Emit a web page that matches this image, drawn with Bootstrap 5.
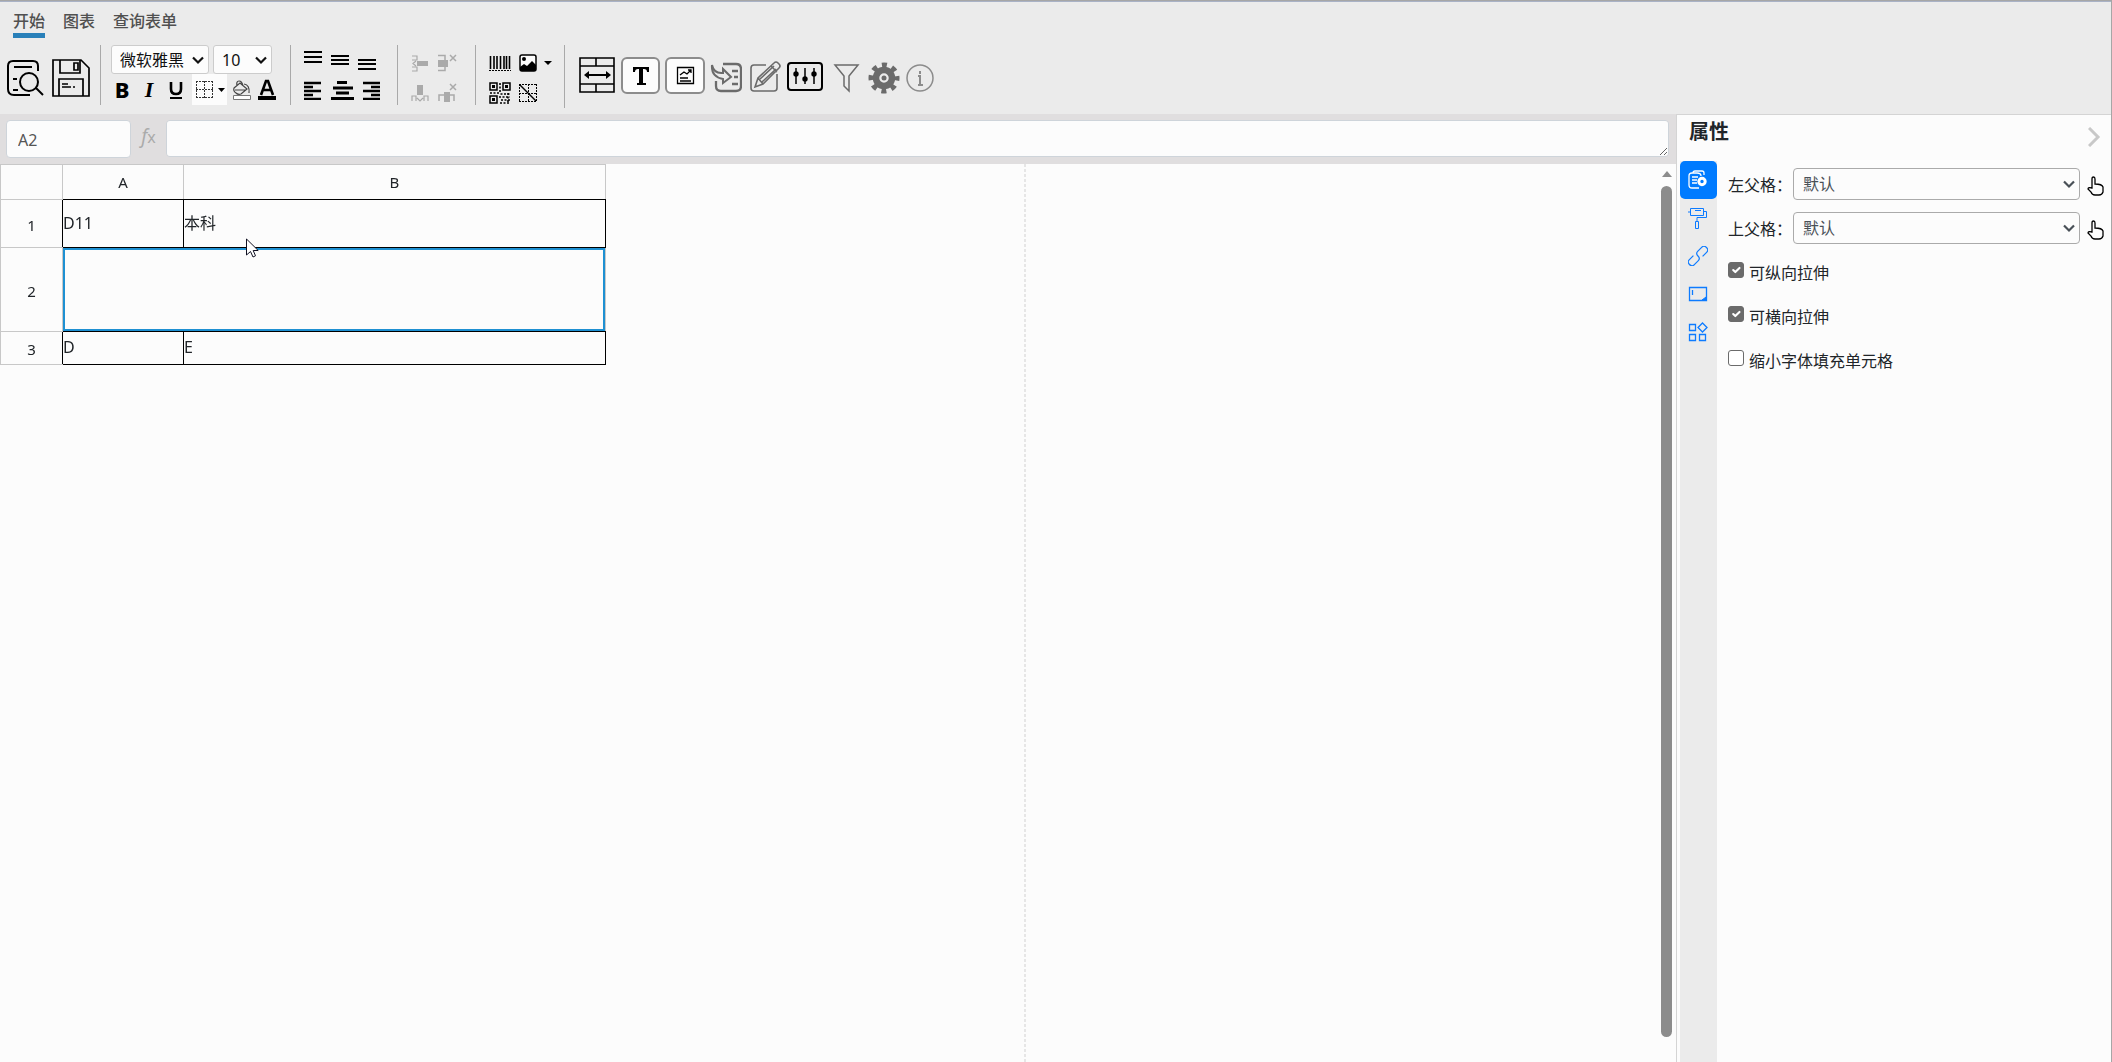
<!DOCTYPE html>
<html lang="zh-CN">
<head>
<meta charset="utf-8">
<meta name="viewport" content="width=device-width, initial-scale=1">
<title>报表设计器</title>
<link href="https://cdn.jsdelivr.net/npm/bootstrap@5.3.0/dist/css/bootstrap.min.css" rel="stylesheet">
<style>
  body { font-family: "Noto Sans", "Noto Sans CJK SC", sans-serif; font-size: 16px; line-height: 24px; color: #212529; background: #fcfcfc; }
  .designer { min-height: 100vh; border-top: 1px solid #a6a6a6; border-right: 1px solid #a6a6a6; }
  svg { display: block; fill: none; stroke: #000; stroke-width: 2; }
  .tool { padding: 0; border: 0; background: transparent; display: flex; align-items: center; justify-content: center; color: #000; }

  /* ribbon */
  .ribbon { background: #ebebeb; border-top: 1px solid #a9b2c6; height: 113px; }
  .ribbon-tabs { padding: 7px 0 0 13px; gap: 18px; height: 43px; }
  .ribbon-tabs a { color: #505050; text-decoration: none; height: 29px; font-weight: 500; line-height: 24px; border-bottom: 5px solid transparent; }
  .ribbon-tabs a.active { border-color: #2980b9; }
  .vline { width: 1px; height: 60px; background: #a9a9a9; }
  .vline.tall { height: 63px; margin-left: 2px; }
  .big-icons { padding: 14px 10px 0 6px; gap: 8px; }
  .font-group { padding: 0 13px 0 10px; }
  .font-group select { height: 29px; padding: 0 24px 0 8px; font-size: 16px; line-height: 24px; color: #111; border: 1px solid #ccc; border-radius: 3px; background-color: #fcfcfc; }
  .form-select { background-image: url("data:image/svg+xml,%3Csvg xmlns='http://www.w3.org/2000/svg' viewBox='0 0 12 12'%3E%3Cpath fill='none' stroke='%23111' stroke-width='2.2' d='M1 3.5l5 5 5-5'/%3E%3C/svg%3E"); background-size: 12px 12px; background-position: right 4px center; }
  .font-family { width: 98px; }
  .font-size { width: 59px; }
  .font-row { height: 31px; gap: 5px; }
  .font-row .tool { width: 22px; height: 31px; font-size: 22px; line-height: 31px; }
  .font-row .tool.narrow { width: 20px; }
  .font-row .tool.wide { width: 35px; background: #fcfcfc; }
  .bold-mark { font-weight: 800; }
  .italic-mark { font-family: "Liberation Serif", serif; font-style: italic; font-weight: 700; }
  .icon-group { padding: 0 10px; }
  .icon-group.low { padding-top: 3px; }
  .icon-group .tool { width: 24px; height: 30px; }
  .pitch { gap: 3px; }
  .pitch-wide { gap: 5px; }
  .off svg { stroke: #aaa; }
  .wide-icons { padding: 12px 0 0 14px; gap: 5px; }
  .wide-icons .gray { stroke: #6b6b6b; }

  /* formula bar */
  .formula { background: #e0dedf; height: 50px; padding: 6px 7px 6px 6px; }
  .formula .form-control { border: 1px solid #ced4da; border-radius: 4px; background: #fcfcfc; color: #555; font-size: 16px; }
  .formula .cell-name { width: 125px; height: 38px; padding: 2px 11px 0; }
  .formula textarea { height: 37px; min-height: 37px; }
  .fx { width: 35px; color: #aaa; font-size: 19px; font-style: italic; line-height: 32px; text-align: center; }
  .fx sub { font-size: 16px; font-style: normal; bottom: 0; }

  /* sheet */
  .page-area { width: 1024px; }
  .page-edge { width: 2px; background: repeating-linear-gradient(#e6e6e6 0 3px, transparent 3px 5px); }
  .sheet { border-collapse: collapse; table-layout: fixed; width: 606px; }
  .sheet th { border: 1px solid #c8c8c8; font-weight: 400; font-size: 15px; text-align: center; padding: 2px 0 0; }
  .sheet .r-head th { padding: 0; }
  .sheet .r-head th + th { border-bottom-color: #000; }
  .sheet .r-one th, .sheet .r-three th { border-right-color: #000; }
  .sheet td { border: 1px solid #000; padding: 0 0 2px; line-height: 24px; vertical-align: middle; }
  .sheet td.picked { border-left-color: #c8c8c8; border-right-color: #c8c8c8; box-shadow: inset 0 0 0 2px #1e90d2; }
  .r-head { height: 35px; } .r-one { height: 48px; } .r-two { height: 84px; } .r-three { height: 33px; }
  .c-index { width: 62px; } .c-a { width: 121px; }
  .pointer { position: absolute; left: 245px; top: 74px; }
  .scroller { width: 11px; margin: 7px 4px 25px 0; gap: 9px; }
  .scroller-arrow { border: 5px solid transparent; border-top: 0; border-bottom: 6px solid #8c8c8c; }
  .scroller-thumb { background: #8c8c8c; border-radius: 6px; width: 11px; }

  /* property panel */
  .panel { width: 435px; border-left: 1px solid #d4d4d4; border-top: 1px solid #d4d4d4; }
  .panel-head { height: 46px; padding: 0 9px 0 12px; }
  .panel-head h2 { font-size: 20px; line-height: 34px; font-weight: 700; margin: 0; }
  .panel-tabs { width: 37px; margin-left: 3px; background: #ebebeb; }
  .panel-tabs .tool { width: 37px; height: 38px; padding-right: 2px; border-radius: 5px; }
  .panel-tabs svg { stroke: #0d7bff; stroke-width: 1; }
  .panel-tabs .active { background: #007bff; }
  .panel-tabs .active svg { stroke: #fff; }
  .fields { padding: 7px 6px 0 11px; gap: 12px; }
  .field { height: 32px; }
  .field label { width: 65px; padding-top: 1px; white-space: nowrap; }
  .field .form-select { height: 32px; padding: 0 24px 0 9px; line-height: 24px; color: #495057; border: 1px solid #aaa; border-radius: 4px; background-color: #fcfcfc; background-image: url("data:image/svg+xml,%3Csvg xmlns='http://www.w3.org/2000/svg' viewBox='0 0 12 12'%3E%3Cpath fill='none' stroke='%23495057' stroke-width='2.2' d='M1 3.5l5 5 5-5'/%3E%3C/svg%3E"); }
  .field .tool { margin-left: 7px; padding-top: 3px; }
  .tick { height: 32px; gap: 5px; }
  .tick .form-check-input { width: 16px; height: 16px; margin: 0 0 4px; border: 1px solid #6b6b6b; border-radius: 3px; }
  .tick .form-check-input:checked { background-color: #6b6b6b; }
  .tick label { padding-top: 1px; }
</style>
</head>
<body>
<div class="designer d-flex flex-column">
  <header class="ribbon">
    <nav class="ribbon-tabs d-flex">
      <a href="#" class="active">开始</a><a href="#">图表</a><a href="#">查询表单</a>
    </nav>
    <div class="d-flex align-items-start">
      <div class="big-icons d-flex">
        <button class="tool" aria-label="预览"><svg width="38" height="38" viewBox="0 0 38 38"><path d="M32 12V7q0-5-5-5H7Q2 2 2 7v23q0 6 6 6h16M8 8h18M7 20h4M7 31h5"/><circle cx="23" cy="23" r="9"/><path d="M30 29l7 7"/></svg></button>
        <button class="tool" aria-label="保存"><svg width="38" height="38" viewBox="0 0 38 38"><path d="M1 1h28l8 8v28H1zM8 1v13h20V1M22 4h4v7h-4zM7 37V20h24v17M10 25h6M10 28h9M21 28h2" stroke-width="1.700"/></svg></button>
      </div>
      <div class="vline"></div>
      <div class="font-group">
        <div class="d-flex gap-1">
          <select class="form-select font-family" aria-label="字体"><option>微软雅黑</option></select>
          <select class="form-select font-size" aria-label="字号"><option>10</option></select>
        </div>
        <div class="font-row d-flex">
          <button class="tool bold-mark">B</button>
          <button class="tool italic-mark">I</button>
          <button class="tool" aria-label="下划线"><svg width="16" height="20" viewBox="0 0 16 20"><path d="M3 2v7q0 5 5 5t5-5V2" stroke-width="2.6"/><path d="M2 18h12"/></svg></button>
          <button class="tool wide" aria-label="边框"><svg width="30" height="20" viewBox="0 0 30 20"><path d="M1 1.500h17M1 9.500h17M1 17.500h17M1.500 1v17M9.500 1v17M17.500 1v17" stroke="#333" stroke-width="1" stroke-dasharray="2 1"/><path d="M23 8h7l-3.500 4z" fill="#000" stroke="none"/></svg></button>
          <button class="tool narrow" aria-label="填充颜色"><svg width="20" height="22" viewBox="0 0 20 22"><path d="M2 9l6-5 7 6-6 5q-3 1-5-1-3-2-2-5zM5 7q-1-5 2-5 3 0 4 5M12 5q6 1 5 9M3 11h11" stroke="#444" stroke-width="1.200"/><path d="M1.500 16.500h17v4h-17z" fill="#fff" stroke="#777" stroke-width="1"/></svg></button>
          <button class="tool narrow" aria-label="字体颜色"><svg width="18" height="22" viewBox="0 0 18 22"><path d="M3 16L8 2h2l5 14M5 11h8" stroke-width="2.600"/><path d="M0 17h18v4H0z" fill="#000" stroke="none"/></svg></button>
        </div>
      </div>
      <div class="vline"></div>
      <div class="icon-group">
        <div class="d-flex pitch">
          <button class="tool" aria-label="顶端对齐"><svg width="18" height="24" viewBox="0 0 18 24"><path d="M0 4h18M0 9h18M0 14h18"/></svg></button>
          <button class="tool" aria-label="垂直居中"><svg width="18" height="24" viewBox="0 0 18 24"><path d="M0 8h18M0 12h18M0 16h18"/></svg></button>
          <button class="tool" aria-label="底端对齐"><svg width="18" height="24" viewBox="0 0 18 24"><path d="M0 12h18M0 16h18M0 21h18"/></svg></button>
        </div>
        <div class="d-flex pitch-wide">
          <button class="tool" aria-label="左对齐"><svg width="18" height="20" viewBox="0 0 18 20"><path d="M0 3h17M0 7h9M0 11h17M0 15h9M0 19h17" stroke-width="2.400"/></svg></button>
          <button class="tool" aria-label="居中"><svg width="23" height="20" viewBox="0 0 23 20"><path d="M6 2.500h10M2 8h20M5 13h13M0 18.500h23" stroke-width="3"/></svg></button>
          <button class="tool" aria-label="右对齐"><svg width="18" height="20" viewBox="0 0 18 20"><path d="M1 3h17M9 7h9M1 11h17M9 15h9M1 19h17" stroke-width="2.400"/></svg></button>
        </div>
      </div>
      <div class="vline ms-1"></div>
      <div class="icon-group low off pe-3">
        <div class="d-flex pitch">
          <button class="tool" aria-label="插入列"><svg width="18" height="20" viewBox="0 0 18 20"><path d="M1 3h5v4H1M1 14h5v4H1M5 8l-3 2.500L5 13" stroke-width="1.200"/><path d="M6 8h11v5H6z" fill="#aaa" stroke="none"/></svg></button>
          <button class="tool" aria-label="删除列"><svg width="20" height="20" viewBox="0 0 20 20"><path d="M1 2.500h7v15H1" stroke-width="1.500"/><path d="M1 7h10v7H1z" fill="#aaa" stroke="none"/><path d="M13 2l6 6M19 2l-6 6" stroke-width="1.500"/></svg></button>
        </div>
        <div class="d-flex pitch">
          <button class="tool" aria-label="插入行"><svg width="18" height="20" viewBox="0 0 18 20"><path d="M1 18v-5h4v5M13 18v-5h4v5M6 15l3 3 3-3" stroke-width="1.200"/><path d="M6 2h6v10H6z" fill="#aaa" stroke="none"/></svg></button>
          <button class="tool" aria-label="删除行"><svg width="20" height="20" viewBox="0 0 20 20"><path d="M2 18v-6h15v6" stroke-width="1.500"/><path d="M7 9h6v10H7z" fill="#aaa" stroke="none"/><path d="M13 1l6 6M19 1l-6 6" stroke-width="1.500"/></svg></button>
        </div>
      </div>
      <div class="vline"></div>
      <div class="icon-group low ps-2">
        <div class="d-flex gap-1 ps-1">
          <button class="tool" aria-label="条形码"><svg width="22" height="18" viewBox="0 0 22 18"><path d="M1.500 2v13M5 2v13M8 2v13M11.500 2v13M15 2v13M17.500 2v13M20.500 2v13" stroke-width="1.600"/><path d="M0 16.500h22" stroke-width="1" stroke-dasharray="2 1"/></svg></button>
          <button class="tool" aria-label="图片"><svg width="18" height="18" viewBox="0 0 18 18"><rect x="1" y="1" width="16" height="16" rx="2" fill="#fcfcfc" stroke-width="1.500"/><circle cx="5" cy="5" r="2" fill="#000" stroke="none"/><path d="M1 17v-4l4-3 3 2 5-5 4 4v6z" fill="#000" stroke="none"/></svg></button>
          <svg class="align-self-center" width="8" height="5" viewBox="0 0 8 5"><path d="M0 0h8L4 4z" fill="#000" stroke="none"/></svg>
        </div>
        <div class="d-flex gap-1 ps-1">
          <button class="tool" aria-label="二维码"><svg width="22" height="22" viewBox="0 0 22 22"><path d="M1 1h7v7H1zM14 1h7v7h-7zM1 14h7v7H1z" stroke-width="1.500"/><path d="M3 3h3v3H3zM16 3h3v3h-3zM3 16h3v3H3z" fill="#000" stroke="none"/><path d="M11 1v9M1 11h9M11.500 12h10M10 15h11M12 18h10M11 21h10M19 11v10" stroke-width="1.600" stroke-dasharray="2 1.500"/></svg></button>
          <button class="tool" aria-label="斜线表头"><svg width="20" height="20" viewBox="0 0 20 20"><path d="M1 1.500h18M1 18.500h18M1.500 1v18M18.500 1v18M1 10.500h18M10.500 1v18" stroke-width="1" stroke-dasharray="2 1"/><path d="M2 2l16 16" stroke-width="1.500"/></svg></button>
        </div>
      </div>
      <div class="vline tall"></div>
      <div class="wide-icons d-flex">
        <button class="tool" aria-label="分页"><svg width="36" height="40" viewBox="0 0 36 40"><path d="M1 1h34v34H1zM1 9h34M1 27h34M17 1v8M17 27v8" stroke-width="1.600"/><path d="M7 18h22"/><path d="M5 18l5-4v8zM32 18l-5-4v8z" fill="#000" stroke="none"/></svg></button>
        <button class="tool" aria-label="文本"><svg width="40" height="40" viewBox="0 0 40 40"><rect x="2" y="1" width="37" height="35" rx="5" fill="#fcfcfc" stroke="#8c8c8c"/><path d="M13 10h16v5h-2q0-3-3-3h-1v14h3v2h-9v-2h2V12h-1q-3 0-3 3h-2z" fill="#000" stroke="none"/></svg></button>
        <button class="tool" aria-label="图表"><svg width="40" height="40" viewBox="0 0 40 40"><rect x="1" y="1" width="38" height="35" rx="5" fill="#fcfcfc" stroke="#8c8c8c"/><path d="M12.500 10.500h16v16h-16zM15 18l4-3 3 2 4-4M23 13h3v3M15 21h8M15 24h11" stroke-width="1.300"/></svg></button>
        <button class="tool" aria-label="导入"><svg class="gray" width="32" height="40" viewBox="0 0 32 40"><path d="M13 7h13q5 0 5 5v17q0 5-5 5H11q-5 0-5-5v-5M22 14h6M24 20h4M22 27h6" stroke-width="2.300"/><path d="M2 8q2 9 11 8v-4l8 8-8 6v-4Q1 20 2 8z"/></svg></button>
        <button class="tool" aria-label="编辑"><svg class="gray" width="34" height="40" viewBox="0 0 34 40"><path d="M19 8H7q-3 0-3 3v20q0 3 3 3h20q3 0 3-3V17M8 30l3-9L27 6q2-2 4 0l1 1q2 2 0 4L16 27zM24 9l6 6M11 21l5 6M13 22l14-13M15 25l14-13" stroke-width="1.600"/></svg></button>
        <button class="tool" aria-label="参数"><svg width="38" height="40" viewBox="0 0 38 40"><rect x="2" y="6" width="34" height="27" rx="3"/><path d="M10 11v16M19 11v16M28 11v16" stroke-width="1.500"/><g fill="#000" stroke="none"><circle cx="10" cy="17" r="2.700"/><circle cx="19" cy="22" r="2.700"/><circle cx="28" cy="17" r="2.700"/></g></svg></button>
        <button class="tool" aria-label="过滤"><svg class="gray" width="34" height="40" viewBox="0 0 34 40"><path d="M6 8h23l-9 11v15l-5-5V19z" stroke-width="1.500"/></svg></button>
        <button class="tool" aria-label="设置"><svg class="gray" width="32" height="40" viewBox="0 0 32 40"><circle cx="16" cy="21" r="8" stroke-width="6.500"/><circle cx="16" cy="21" r="13" stroke-width="5" stroke-dasharray="5 5.210" stroke-dashoffset="2.500"/><circle cx="16" cy="21" r="2.500" fill="#6b6b6b" stroke="none"/></svg></button>
        <button class="tool" aria-label="关于"><svg class="gray" width="30" height="40" viewBox="0 0 30 40"><circle cx="15" cy="21" r="13" stroke="#8c8c8c" stroke-width="1.500"/><path d="M13 19h2v9M13 28h5M15 14v3" stroke="#8c8c8c"/></svg></button>
      </div>
    </div>
  </header>

  <div class="d-flex flex-grow-1">
    <main class="flex-grow-1 d-flex flex-column" style="min-width:0">
      <div class="formula d-flex">
        <input class="form-control cell-name" aria-label="单元格" value="A2">
        <span class="fx flex-shrink-0">f<sub>x</sub></span>
        <textarea class="form-control flex-grow-1" aria-label="公式" rows="1"></textarea>
      </div>
      <div class="d-flex flex-grow-1 position-relative">
        <div class="page-area">
          <table class="sheet">
            <colgroup><col class="c-index"><col class="c-a"><col></colgroup>
            <tr class="r-head"><th></th><th>A</th><th>B</th></tr>
            <tr class="r-one"><th>1</th><td>D11</td><td>本科</td></tr>
            <tr class="r-two"><th>2</th><td class="picked" colspan="2"></td></tr>
            <tr class="r-three"><th>3</th><td>D</td><td>E</td></tr>
          </table>
        </div>
        <div class="page-edge"></div>
        <div class="scroller d-flex flex-column align-items-center ms-auto">
          <div class="scroller-arrow"></div>
          <div class="scroller-thumb flex-grow-1"></div>
        </div>
        <svg class="pointer" width="14" height="20" viewBox="0 0 14 20"><path d="M1.500 1v16l4-3.500 2.500 5.500 2.500-1.200-2.300-5.300h5z" fill="#fff" stroke="#112" stroke-width="1"/></svg>
      </div>
    </main>

    <aside class="panel d-flex flex-column flex-shrink-0">
      <div class="panel-head d-flex justify-content-between">
        <h2>属性</h2>
        <button class="tool align-self-start pt-2 mt-1" aria-label="收起"><svg width="14" height="20" viewBox="0 0 14 20"><path d="M1 1l9 9-9 9" stroke="#c8c8c8" stroke-width="3"/></svg></button>
      </div>
      <div class="d-flex flex-grow-1">
        <div class="panel-tabs flex-shrink-0">
          <button class="tool active" aria-label="属性"><svg width="20" height="20" viewBox="0 0 20 20"><path d="M5 3q0-2 2-2h7q2 0 2 2v2M11 18H4q-3 0-3-3V6q0-3 3-3h5q4 0 4 3M4 7h6M4 10h5M4 13h5" stroke-width="1.300"/><circle cx="14" cy="11.500" r="3.200" stroke-width="3"/></svg></button>
          <button class="tool" aria-label="样式"><svg width="20" height="22" viewBox="0 0 20 22"><path d="M2.500 1.500h13v7h-13zM0 5h3M16 4.500h2.500v6H9v4M7.500 14.500h3v7h-3zM7 3.500h6"/></svg></button>
          <button class="tool" aria-label="链接"><svg width="20" height="20" viewBox="0 0 20 20"><g transform="rotate(-45 10 10)" stroke-width="1.200"><path d="M7 6.500H1q-3 0-3 3.500t3 3.500h6q3 0 3-3.500M13 13.500h6q3 0 3-3.500t-3-3.500h-6q-3 0-3 3.500"/></g></svg></button>
          <button class="tool" aria-label="单元格"><svg width="20" height="16" viewBox="0 0 20 16"><path d="M1.500 1.500h17v13h-17zM4.500 4v5" stroke-width="1.300"/><path d="M18 11v3h-4z" fill="#0d7bff"/></svg></button>
          <button class="tool" aria-label="组件"><svg width="20" height="20" viewBox="0 0 20 20"><path d="M1.500 2.500h6v6h-6zM1.500 12.500h6v6h-6zM11.500 12.500h6v6h-6zM14.500 1l4.500 4.500-4.500 4.500-4.500-4.500z" stroke-width="1.300"/></svg></button>
        </div>
        <div class="fields flex-grow-1 d-flex flex-column">
          <div class="field d-flex align-items-center">
            <label class="flex-shrink-0" for="left-parent">左父格：</label>
            <select class="form-select" id="left-parent"><option>默认</option></select>
            <button class="tool" aria-label="选取左父格"><svg width="18" height="20" viewBox="0 0 18 20"><path d="M5 12V3q0-2 1.500-2T8 3v5q7 0 8 3v5q-1 3-4 3H8q-3 0-4-3l-3-3q0-2 4-1z" stroke-width="1.300"/></svg></button>
          </div>
          <div class="field d-flex align-items-center">
            <label class="flex-shrink-0" for="top-parent">上父格：</label>
            <select class="form-select" id="top-parent"><option>默认</option></select>
            <button class="tool" aria-label="选取上父格"><svg width="18" height="20" viewBox="0 0 18 20"><path d="M5 12V3q0-2 1.500-2T8 3v5q7 0 8 3v5q-1 3-4 3H8q-3 0-4-3l-3-3q0-2 4-1z" stroke-width="1.300"/></svg></button>
          </div>
          <div class="tick d-flex align-items-center"><input class="form-check-input" type="checkbox" id="grow-v" checked><label for="grow-v">可纵向拉伸</label></div>
          <div class="tick d-flex align-items-center"><input class="form-check-input" type="checkbox" id="grow-h" checked><label for="grow-h">可横向拉伸</label></div>
          <div class="tick d-flex align-items-center"><input class="form-check-input" type="checkbox" id="shrink-font"><label for="shrink-font">缩小字体填充单元格</label></div>
        </div>
      </div>
    </aside>
  </div>
</div>
<script src="https://cdn.jsdelivr.net/npm/bootstrap@5.3.0/dist/js/bootstrap.bundle.min.js"></script>
</body>
</html>
